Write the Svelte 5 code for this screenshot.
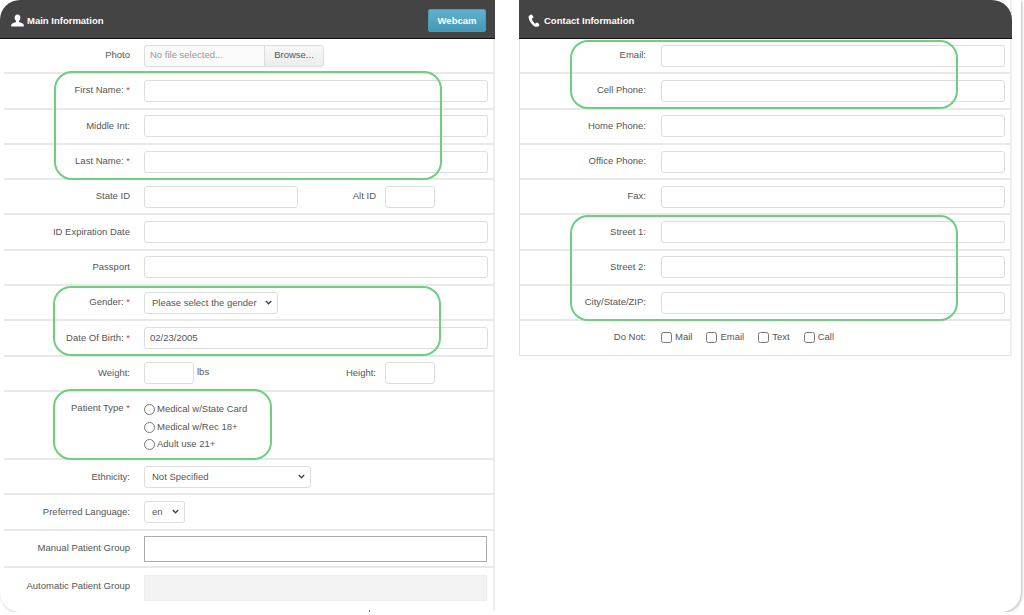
<script>
	const mainRows = [
		{ label: 'First Name:', req: true },
		{ label: 'Middle Int:' },
		{ label: 'Last Name:', req: true }
	];
	const idRows = [{ label: 'ID Expiration Date' }, { label: 'Passport' }];
	const contactTop = ['Email:', 'Cell Phone:', 'Home Phone:', 'Office Phone:', 'Fax:', 'Street 1:', 'Street 2:', 'City/State/ZIP:'];
	const patientTypes = ['Medical w/State Card', 'Medical w/Rec 18+', 'Adult use 21+'];
	const doNot = ['Mail', 'Email', 'Text', 'Call'];
</script>

<div class="frame">
	<section class="panel left">
		<header class="head">
			<svg class="icon" viewBox="0 0 14 14" width="13" height="13"><path d="M7 .5c2 0 3.100 1.400 3.100 3.400 0 1.500-.6 2.900-1.500 3.600v1.200c1.700.6 4.200 1.300 4.900 2.300.3.500.3 1.500.3 2.500H.2c0-1 0-2 .3-2.500.7-1 3.200-1.700 4.900-2.300V7.500C4.500 6.800 3.900 5.400 3.900 3.900 3.900 1.900 5 .5 7 .5z" fill="#fff"/></svg>
			<span class="title">Main Information</span>
			<button class="webcam" type="button">Webcam</button>
		</header>

		<div class="row">
			<span class="lbl">Photo</span>
			<div class="filegroup">
				<input class="field" type="text" placeholder="No file selected..." readonly />
				<button type="button">Browse...</button>
			</div>
		</div>

		{#each mainRows as r}
			<div class="row">
				<span class="lbl">{r.label} {#if r.req}<i>*</i>{/if}</span>
				<input class="field wide" type="text" />
			</div>
		{/each}

		<div class="row">
			<span class="lbl">State ID</span>
			<div class="pair">
				<input class="field" type="text" />
				<span class="lbl2">Alt ID</span>
				<input class="field" type="text" />
			</div>
		</div>

		{#each idRows as r}
			<div class="row">
				<span class="lbl">{r.label}</span>
				<input class="field wide" type="text" />
			</div>
		{/each}

		<div class="row">
			<span class="lbl">Gender: <i>*</i></span>
			<select class="sel gender"><option>Please select the gender</option></select>
		</div>
		<div class="row">
			<span class="lbl">Date Of Birth: <i>*</i></span>
			<input class="field wide" type="text" value="02/23/2005" />
		</div>

		<div class="row">
			<span class="lbl">Weight:</span>
			<div class="pair">
				<div class="weight"><input class="field" type="text" /><span>lbs</span></div>
				<span class="lbl2">Height:</span>
				<input class="field" type="text" />
			</div>
		</div>

		<div class="row tall">
			<span class="lbl">Patient Type <i>*</i></span>
			<div class="radios">
				{#each patientTypes as t}
					<label><input type="radio" name="ptype" /><span>{t}</span></label>
				{/each}
			</div>
		</div>

		<div class="row flat">
			<span class="lbl">Ethnicity:</span>
			<select class="sel ethnicity"><option>Not Specified</option></select>
		</div>
		<div class="row flat">
			<span class="lbl">Preferred Language:</span>
			<select class="sel lang"><option>en</option></select>
		</div>
		<div class="row manual">
			<span class="lbl">Manual Patient Group</span>
			<input class="field wide square" type="text" />
		</div>
		<div class="row auto">
			<span class="lbl">Automatic Patient Group</span>
			<input class="field wide disabled" type="text" disabled />
		</div>
	</section>

	<section class="panel right">
		<header class="head">
			<svg class="icon" viewBox="0 0 14 14" width="13" height="13"><path d="M3.300.6 1.500 1.700C.6 2.400.5 3.700.9 5.100c.8 2.700 2.400 5 4.500 6.900 1.300 1.200 3 1.900 4.500 1.700.9-.1 1.700-.7 2.200-1.700.2-.4.100-.8-.2-1.100L10.300 9.400c-.3-.2-.7-.2-1 0l-1 .8c-.3.200-.6.200-.9 0C6 9 4.800 7.300 4.300 5.600c-.1-.4 0-.7.300-.9l1-.6c.3-.2.400-.5.300-.9L4.500 1c-.2-.5-.8-.7-1.200-.4z" fill="#fff"/></svg>
			<span class="title">Contact Information</span>
		</header>

		{#each contactTop as label}
			<div class="row">
				<span class="lbl">{label}</span>
				<input class="field wide" type="text" />
			</div>
		{/each}

		<div class="row donot">
			<span class="lbl">Do Not:</span>
			<div class="checks">
				{#each doNot as d}
					<label><input type="checkbox" /><span>{d}</span></label>
				{/each}
			</div>
		</div>
	</section>

	<!-- green annotation boxes drawn over the form -->
	<div class="mark m1"></div>
	<div class="mark m2"></div>
	<div class="mark m3"></div>
	<div class="mark m4"></div>
	<div class="mark m5"></div>
	<div class="tick"></div>
</div>

<style>
	:global(body) {
		background: #fff;
	}

	.frame {
		position: relative;
		display: flex;
		align-items: flex-start;
		gap: 24px;
		box-sizing: border-box;
		width: 1021px;
		height: 612px;
		padding-right: 9px;
		border-radius: 0 0 20px 20px;
		box-shadow: 1px 1px 3px #bbb;
		font-family: 'Liberation Sans', Arial, sans-serif;
		font-size: 9.5px;
		color: #555;
		overflow: hidden;
	}

	.panel {
		box-sizing: border-box;
		width: 495px;
		border-right: 2px solid #eee;
	}

	.panel.right {
		width: 493px;
		border-left: 1px solid #e2e2e2;
		border-bottom: 1px solid #e2e2e2;
	}

	.head {
		display: flex;
		align-items: center;
		box-sizing: border-box;
		height: 39px;
		margin-right: -2px;
		padding: 2px 9px 0 11px;
		background: #444;
		border-bottom: 1px solid #111;
		color: #fff;
	}

	.left .head {
		border-top-left-radius: 20px;
	}

	.right .head {
		margin-left: -1px;
		padding-left: 9px;
		border-top-right-radius: 20px;
	}

	.icon {
		flex-shrink: 0;
		margin-right: 3px;
	}

	.title {
		flex: 1;
		font-weight: bold;
	}

	.webcam {
		width: 58px;
		height: 23px;
		padding: 0;
		border: 1px solid #46a0bd;
		border-radius: 2px;
		background: linear-gradient(#5bb3d0, #4698b5);
		color: #fff;
		font: bold 9.5px 'Liberation Sans', Arial, sans-serif;
	}

	.row {
		display: flex;
		align-items: center;
		box-sizing: border-box;
		height: 35.3px;
		margin-left: 4px;
		padding-right: 5px;
		border-bottom: 2px solid #e8e8e8;
	}

	.right .row {
		margin-left: 0;
		padding-right: 5px;
	}

	.lbl {
		flex-shrink: 0;
		box-sizing: border-box;
		width: 126px;
		margin-right: 14px;
		margin-bottom: 2px;
		text-align: right;
	}

	.right .lbl {
		margin-right: 15px;
	}

	.flat .lbl {
		margin-bottom: 0;
	}

	.lbl i {
		color: #e33;
		font-style: normal;
	}

	.field {
		box-sizing: border-box;
		height: 22px;
		min-width: 0;
		margin: 0;
		padding: 0 5px 2px;
		border: 1px solid #ddd;
		border-radius: 3px;
		background: #fff;
		color: #555;
		font: 9.5px 'Liberation Sans', Arial, sans-serif;
	}

	.field::placeholder {
		color: #999;
	}

	.wide {
		flex: 1;
	}

	.square {
		height: 26px;
		margin: 2px 1px 0 0;
		border: 1px solid #aaa;
		border-radius: 0;
	}

	.disabled {
		height: 26px;
		margin-right: 1px;
		border-color: #eee;
		border-radius: 0;
		background: #f3f3f3;
	}

	.filegroup {
		display: flex;
		width: 180px;
	}

	.filegroup .field {
		width: 120px;
		border-right: 0;
		border-radius: 3px 0 0 3px;
		background: #fafafa;
	}

	.filegroup button {
		flex: 1;
		height: 22px;
		padding: 0 0 2px;
		border: 1px solid #ddd;
		border-radius: 0 3px 3px 0;
		background: linear-gradient(#f8f8f8, #ececec);
		color: #555;
		font: 9.5px 'Liberation Sans', Arial, sans-serif;
	}

	.pair {
		display: grid;
		grid-template-columns: 154px 87px 50px;
		align-items: center;
	}

	.pair .field {
		width: 100%;
	}

	.lbl2 {
		margin-bottom: 2px;
		padding-right: 9px;
		text-align: right;
	}

	.weight {
		display: flex;
		align-items: center;
		gap: 3px;
	}

	.weight .field {
		width: 50px;
	}

	.weight span {
		margin-top: -3px;
	}

	.sel {
		box-sizing: border-box;
		height: 22px;
		padding: 0 18px 1px 7px;
		border: 1px solid #ddd;
		border-radius: 3px;
		appearance: none;
		background: #fff url("data:image/svg+xml,%3Csvg xmlns='http://www.w3.org/2000/svg' width='7' height='5'%3E%3Cpath d='M.8 1l2.700 2.700L6.200 1' fill='none' stroke='%23444' stroke-width='1.400'/%3E%3C/svg%3E") no-repeat right 5px center;
		color: #555;
		font: 9.5px 'Liberation Sans', Arial, sans-serif;
	}

	.gender {
		width: 134px;
	}

	.ethnicity {
		width: 167px;
	}

	.lang {
		width: 41px;
	}

	.tall {
		align-items: flex-start;
		height: 68px;
		padding-top: 11px;
	}

	.tall .lbl {
		margin-top: -1px;
	}

	.radios {
		display: flex;
		flex-direction: column;
		gap: 6px;
		margin-top: 1px;
	}

	.radios label,
	.checks label {
		display: flex;
		align-items: center;
		height: 11.5px;
		color: #555;
	}

	.radios label span,
	.checks label span {
		margin-top: -2px;
	}

	.radios input {
		width: 11px;
		height: 11px;
		margin: 0 2px 0 0;
		accent-color: #777;
	}

	.manual {
		height: 37.5px;
	}

	.auto {
		align-items: flex-start;
		height: 42px;
		padding-top: 7px;
		border-bottom: 0;
	}

	.auto .lbl {
		margin-top: 5px;
	}

	.donot {
		height: 34px;
		border-bottom: 0;
	}

	.donot .lbl {
		margin-bottom: 3px;
	}

	.checks {
		display: flex;
		margin-bottom: 2px;
	}

	.checks label {
		margin-right: 14px;
	}

	.checks input {
		width: 11px;
		height: 11px;
		margin: 0 3px 0 0;
	}

	.mark {
		position: absolute;
		box-sizing: border-box;
		border: 2px solid #6ecf80;
		border-radius: 18px;
		pointer-events: none;
	}

	.m1 {
		left: 54px;
		top: 71px;
		width: 388px;
		height: 109px;
	}

	.m2 {
		left: 53px;
		top: 286px;
		width: 388px;
		height: 70px;
	}

	.m3 {
		left: 53px;
		top: 389px;
		width: 219px;
		height: 71px;
	}

	.m4 {
		left: 570px;
		top: 40px;
		width: 388px;
		height: 69px;
	}

	.m5 {
		left: 570px;
		top: 215px;
		width: 388px;
		height: 106px;
	}

	.tick {
		position: absolute;
		left: 369px;
		top: 610px;
		width: 1px;
		height: 2px;
		background: #777;
	}
</style>
